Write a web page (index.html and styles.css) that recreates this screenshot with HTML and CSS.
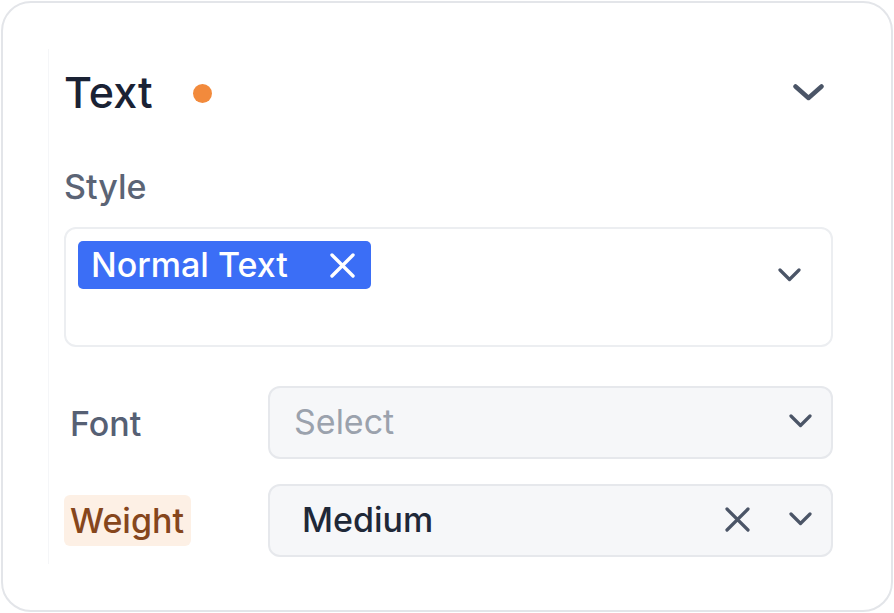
FILE: index.html
```html
<!DOCTYPE html>
<html lang="en">
<head>
<meta charset="utf-8">
<title>Text settings</title>
<link rel="stylesheet" href="styles.css">
</head>
<body>
<div class="card">
  <div class="inner">
    <div class="title-row">
      <span class="title">Text</span>
      <span class="dot"></span>
      <svg class="chev-lg" viewBox="0 0 31 17" width="31" height="17"><path d="M2.5 2.5 L15.5 14 L28.5 2.5" fill="none" stroke="#4b5567" stroke-width="4.5" stroke-linecap="round" stroke-linejoin="round"/></svg>
    </div>
    <div class="section-label">Style</div>
    <div class="multi">
      <div class="tags">
        <span class="tag">Normal Text<svg class="tag-x" viewBox="0 0 25 25" width="25" height="25"><path d="M2 2 L23 23 M23 2 L2 23" stroke="#fff" stroke-width="3.4" stroke-linecap="round"/></svg></span>
      </div>
      <svg class="multi-chev" viewBox="0 0 23 14" width="23" height="14"><path d="M2 2 L11.5 11.5 L21 2" fill="none" stroke="#4b5567" stroke-width="3.2" stroke-linecap="round" stroke-linejoin="round"/></svg>
    </div>
    <div class="field-row">
      <span class="field-label">Font</span>
      <div class="select">
        <span class="placeholder">Select</span>
        <svg class="chev-sm" viewBox="0 0 23 14" width="23" height="14"><path d="M2 2 L11.5 11.5 L21 2" fill="none" stroke="#4b5567" stroke-width="3.2" stroke-linecap="round" stroke-linejoin="round"/></svg>
      </div>
    </div>
    <div class="field-row">
      <span class="field-label changed">Weight</span>
      <div class="select">
        <span class="value">Medium</span>
        <svg class="clear-x" viewBox="0 0 25 25" width="25" height="25"><path d="M2 2 L23 23 M23 2 L2 23" stroke="#4b5567" stroke-width="3.2" stroke-linecap="round"/></svg>
        <svg class="chev-sm" viewBox="0 0 23 14" width="23" height="14"><path d="M2 2 L11.5 11.5 L21 2" fill="none" stroke="#4b5567" stroke-width="3.2" stroke-linecap="round" stroke-linejoin="round"/></svg>
      </div>
    </div>
  </div>
</div>
</body>
</html>
```
FILE: styles.css
```css
* { box-sizing: border-box; }
html, body { margin: 0; padding: 0; background: #ffffff; }
body {
  font-family: Inter, "Noto Sans", sans-serif;
  width: 894px;
  height: 613px;
  padding: 1px;
}
.card {
  width: 892px;
  height: 611px;
  border: 2px solid #e3e5e9;
  border-radius: 30px;
  padding: 46px 0 46px 45px;
  background: #fff;
}
.inner {
  height: 100%;
  border-left: 1px solid #f5f6f8;
  padding: 19px 0 0 15px;
  width: 786px;
}
.title-row {
  display: flex;
  align-items: center;
  height: 48px;
  width: 768px;
}
.title {
  font-size: 43px;
  line-height: 48px;
  font-weight: 500;
  color: #1a2234;
  letter-spacing: 0.1px;
}
.dot {
  width: 19px;
  height: 19px;
  border-radius: 50%;
  background: #f28a3c;
  margin-left: 40px;
  margin-top: 2px;
}
.chev-lg {
  margin-left: auto;
  margin-right: 8px;
}
.section-label {
  margin-top: 51px;
  font-size: 34px;
  line-height: 40px;
  color: #5b6475;
  font-weight: 500;
}
.multi {
  margin-top: 20px;
  height: 120px;
  width: 769px;
  border: 2px solid #eceef1;
  border-radius: 12px;
  padding: 12px;
  display: flex;
  align-items: flex-start;
}
.tags { display: flex; flex: 1; }
.tag {
  display: inline-flex;
  align-items: center;
  height: 48px;
  background: #3b6ef6;
  color: #fff;
  border-radius: 5px;
  padding: 0 16px 0 13px;
  font-size: 34px;
  line-height: 48px;
  font-weight: 500;
}
.tag-x { margin-left: 42px; }
.multi-chev {
  margin-top: 27px;
  margin-right: 18px;
}
.field-row {
  display: grid;
  grid-template-columns: 204px 565px;
  align-items: center;
  margin-top: 25px;
}
.multi + .field-row { margin-top: 39px; }
.field-label {
  justify-self: start;
  font-size: 34px;
  line-height: 51px;
  padding: 2px 7px 0 6px;
  color: #566074;
  font-weight: 500;
  border-radius: 6px;
}
.field-label.changed {
  background: #fdf0e5;
  color: #86461c;
  padding-top: 0;
}
.select {
  height: 73px;
  border: 2px solid #e6e8ec;
  background: #f6f7f9;
  border-radius: 12px;
  display: flex;
  align-items: center;
  padding: 0 19px 0 24px;
  font-size: 34px;
}
.placeholder {
  flex: 1;
  color: #9ba2ad;
  margin-top: -3px;
}
.value {
  flex: 1;
  color: #1f2838;
  font-weight: 500;
  padding-left: 8px;
  margin-top: -3px;
}
.clear-x {
  margin-right: 39px;
  margin-top: -2px;
}
.chev-sm { margin-top: -3px; }
```
